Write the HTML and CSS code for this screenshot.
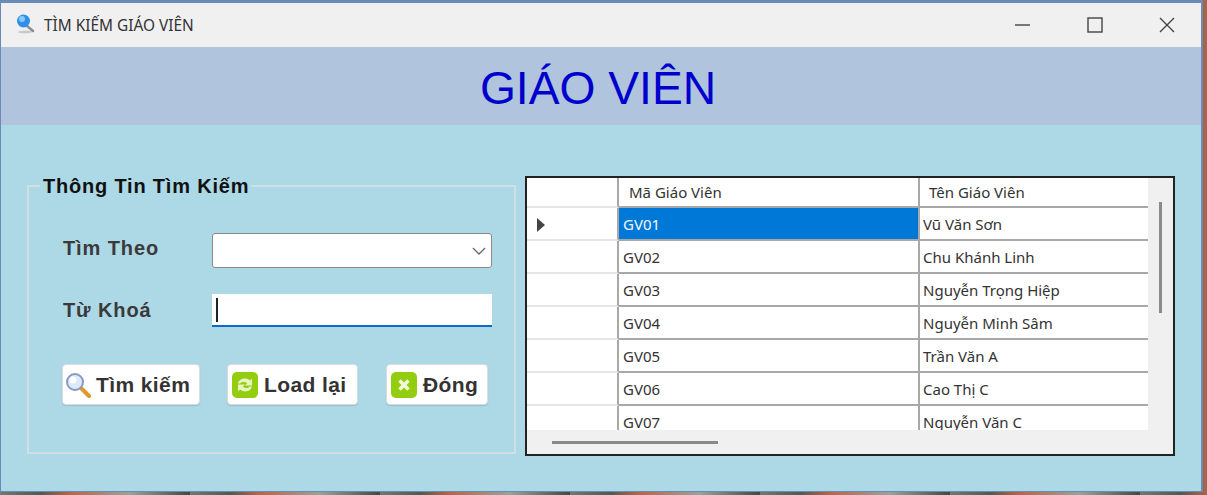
FILE: index.html
```html
<!DOCTYPE html>
<html lang="en">
<head>
    <meta charset="UTF-8">
    <meta name="viewport" content="width=device-width, initial-scale=1.0">
    <title>Tìm Kiếm Giáo Viên</title>
    <link rel="stylesheet" href="styles.css">
</head>
<body>
    <div class="window">
        <div class="titlebar">
            <svg class="title-icon" width="22" height="24" viewBox="0 0 22 24">
                <ellipse cx="10" cy="20" rx="7" ry="1.5" fill="#c9c9c9"/>
                <path d="M12 14l6 5" stroke="#8a8f96" stroke-width="2.5" stroke-linecap="round"/>
                <circle cx="8.5" cy="9" r="6.5" fill="#2f8fe8"/>
                <circle cx="7" cy="7" r="3" fill="#8cc8fa"/>
            </svg>
            <span class="title-text">TÌM KIẾM GIÁO VIÊN</span>
            <div class="window-controls">
                <svg width="16" height="16" viewBox="0 0 16 16"><path d="M0 8h15" stroke="#444" stroke-width="1.4"/></svg>
                <svg width="16" height="16" viewBox="0 0 16 16"><rect x="1" y="1" width="14" height="14" fill="none" stroke="#444" stroke-width="1.4"/></svg>
                <svg width="16" height="16" viewBox="0 0 16 16"><path d="M1 1l14 14M15 1L1 15" stroke="#444" stroke-width="1.4"/></svg>
            </div>
        </div>

        <div class="banner">GIÁO VIÊN</div>

        <div class="content">
            <fieldset class="search-group">
                <legend>Thông Tin Tìm Kiếm</legend>

                <div class="field field-combo">
                    <label for="search-by">Tìm Theo</label>
                    <div class="combo" id="search-by">
                        <svg width="14" height="8" viewBox="0 0 14 8"><path d="M1 1l6 6 6-6" fill="none" stroke="#666" stroke-width="1.3"/></svg>
                    </div>
                </div>

                <div class="field field-keyword">
                    <label for="keyword">Từ Khoá</label>
                    <div class="keyword" id="keyword"><span class="caret"></span></div>
                </div>

                <div class="actions">
                    <button class="btn btn-search" type="button">
                        <svg width="26" height="26" viewBox="0 0 26 26">
                            <path d="M16 16l8 8" stroke="#e09a2c" stroke-width="4" stroke-linecap="round"/>
                            <circle cx="10" cy="10" r="8" fill="#dcebfa" stroke="#8c96c4" stroke-width="2"/>
                            <circle cx="8" cy="8" r="3.500" fill="#fff"/>
                        </svg>
                        Tìm kiếm
                    </button>
                    <button class="btn btn-reload" type="button">
                        <svg width="26" height="26" viewBox="0 0 26 26">
                            <rect width="26" height="26" rx="5" fill="#94cc10"/>
                            <path d="M6 11.500c1-5 8-6.500 12-3l2-2v7h-7l2.200-2.200c-2.500-2-6-1.500-7 .2zM20 14.500c-1 5-8 6.500-12 3l-2 2v-7h7l-2.200 2.200c2.500 2 6 1.500 7-.2z" fill="#e6f5c0"/>
                        </svg>
                        Load lại
                    </button>
                    <button class="btn btn-close" type="button">
                        <svg width="26" height="26" viewBox="0 0 26 26">
                            <rect width="26" height="26" rx="5" fill="#94cc10"/>
                            <path d="M8.500 8.500l9 9M17.500 8.500l-9 9" stroke="#f0f8d8" stroke-width="3.600"/>
                        </svg>
                        Đóng
                    </button>
                </div>
            </fieldset>

            <div class="data-grid">
                <div class="grid-top">
                    <div class="grid-rows">
                        <div class="row row-head">
                            <div class="cell-head"></div>
                            <div class="cell">Mã Giáo Viên</div>
                            <div class="cell">Tên Giáo Viên</div>
                        </div>
                        <div class="row row-active">
                            <div class="cell-head"><span class="arrow"></span></div>
                            <div class="cell cell-selected">GV01</div>
                            <div class="cell">Vũ Văn Sơn</div>
                        </div>
                        <div class="row">
                            <div class="cell-head"></div>
                            <div class="cell">GV02</div>
                            <div class="cell">Chu Khánh Linh</div>
                        </div>
                        <div class="row">
                            <div class="cell-head"></div>
                            <div class="cell">GV03</div>
                            <div class="cell">Nguyễn Trọng Hiệp</div>
                        </div>
                        <div class="row">
                            <div class="cell-head"></div>
                            <div class="cell">GV04</div>
                            <div class="cell">Nguyễn Minh Sâm</div>
                        </div>
                        <div class="row">
                            <div class="cell-head"></div>
                            <div class="cell">GV05</div>
                            <div class="cell">Trần Văn A</div>
                        </div>
                        <div class="row">
                            <div class="cell-head"></div>
                            <div class="cell">GV06</div>
                            <div class="cell">Cao Thị C</div>
                        </div>
                        <div class="row">
                            <div class="cell-head"></div>
                            <div class="cell">GV07</div>
                            <div class="cell">Nguyễn Văn C</div>
                        </div>
                    </div>
                    <div class="vscroll"><div class="vthumb"></div></div>
                </div>
                <div class="hscroll"><div class="hthumb"></div></div>
            </div>
        </div>
    </div>
</body>
</html>
```

FILE: styles.css
```css
html, body {
    margin: 0;
    height: 495px;
    overflow: hidden;
}
body {
    background: repeating-linear-gradient(90deg, #6f7a70 0, #4f5a50 40px, #b9654a 70px, #9aa39a 130px, #3f4a44 190px);
    font-family: "Liberation Sans", Arial, sans-serif;
}
.window {
    box-sizing: border-box;
    width: 1203px;
    height: 492px;
    border: 1px solid #6a8bb5;
    border-top-width: 3px;
    border-right-width: 2px;
    display: flex;
    flex-direction: column;
    background-color: #add8e6;
}
.titlebar {
    height: 44px;
    flex-shrink: 0;
    display: flex;
    align-items: center;
    background-color: #f0f0f0;
    padding-left: 14px;
}
.title-icon {
    margin-top: -3px;
}
.title-text {
    margin-left: 7px;
    font-family: "Noto Sans", sans-serif;
    font-size: 15.400px;
    color: #333;
}
.window-controls {
    margin-left: auto;
    margin-right: 26px;
    display: flex;
    gap: 56px;
}
.banner {
    height: 78px;
    flex-shrink: 0;
    background-color: #b0c4de;
    color: #0000cd;
    font-size: 46.200px;
    line-height: 82px;
    text-align: center;
    box-sizing: border-box;
    padding-right: 6px;
}
.content {
    flex: 1;
    display: flex;
    align-items: flex-start;
    padding: 51px 0 0 26px;
    gap: 9px;
}
.search-group {
    box-sizing: border-box;
    width: 489px;
    height: 278px;
    margin: 0;
    padding: 0 0 0 34px;
    border: 2px solid #cfdfe6;
    border-radius: 0;
}
.search-group legend {
    margin-left: -23px;
    padding: 0 2px 0 3px;
    font-size: 20px;
    font-weight: bold;
    color: #111;
    line-height: 20px;
    letter-spacing: 0.8px;
}
.field {
    display: flex;
    align-items: center;
}
.field label {
    width: 149px;
    font-size: 20px;
    font-weight: bold;
    color: #3a3a3a;
    letter-spacing: 0.9px;
}
.field-combo {
    margin-top: 37px;
}
.field-combo label {
    padding-bottom: 5px;
}
.field-keyword {
    margin-top: 26px;
}
.combo {
    box-sizing: border-box;
    width: 280px;
    height: 35px;
    background-color: #fff;
    border: 1px solid #8a8a8a;
    border-radius: 3px;
    display: flex;
    align-items: center;
    justify-content: flex-end;
    padding-right: 5px;
}
.keyword {
    box-sizing: border-box;
    width: 280px;
    height: 33px;
    background-color: #fff;
    border-bottom: 2px solid #0a6cc4;
    display: flex;
    align-items: center;
    padding-left: 4px;
}
.caret {
    width: 2px;
    height: 24px;
    background-color: #222;
}
.actions {
    display: flex;
    margin: 37px 0 0 -1px;
}
.btn {
    height: 41px;
    box-sizing: border-box;
    display: flex;
    align-items: center;
    background-color: #fff;
    border: 1px solid #dcdcdc;
    border-radius: 4px;
    box-shadow: 0 1px 1px rgba(0, 0, 0, 0.12);
    font-family: "Liberation Sans", Arial, sans-serif;
    font-size: 21px;
    font-weight: bold;
    letter-spacing: 0.4px;
    color: #333;
    padding: 0;
}
.btn-search {
    width: 138px;
    padding-left: 2px;
    gap: 5px;
}
.btn-reload {
    width: 131px;
    margin-left: 27px;
    padding-left: 4px;
    gap: 6px;
}
.btn-close {
    width: 102px;
    margin-left: 28px;
    padding-left: 4px;
    gap: 6px;
}
.data-grid {
    box-sizing: border-box;
    width: 650px;
    height: 280px;
    border: 2px solid #222;
    background-color: #f0f0f0;
    display: flex;
    flex-direction: column;
}
.grid-top {
    height: 252px;
    display: flex;
}
.grid-rows {
    width: 621px;
    height: 252px;
    overflow: hidden;
    background-color: #fff;
}
.row {
    box-sizing: border-box;
    height: 33px;
    display: grid;
    grid-template-columns: 92px 301px 228px;
    font-family: "Noto Sans", sans-serif;
    font-size: 15px;
    color: #333;
}
.row-head {
    height: 30px;
}
.cell-head {
    box-sizing: border-box;
    border-right: 2px solid #a8a8a8;
    border-bottom: 2px solid #e6e6e6;
    display: flex;
    align-items: center;
    padding: 2px 0 0 10px;
}
.cell {
    box-sizing: border-box;
    border-right: 2px solid #a8a8a8;
    border-bottom: 2px solid #a8a8a8;
    padding: 1px 0 0 4px;
    line-height: 31px;
    white-space: nowrap;
    overflow: hidden;
}
.row-head .cell {
    padding: 0 0 0 10px;
    line-height: 28px;
}
.row .cell:last-child {
    border-right: none;
    padding-left: 3px;
}
.row-head .cell:last-child {
    padding-left: 9px;
}
.cell-selected {
    background-color: #0078d7;
    color: #f2f8ff;
}
.arrow {
    width: 0;
    height: 0;
    border-left: 8px solid #444;
    border-top: 7px solid transparent;
    border-bottom: 7px solid transparent;
}
.vscroll {
    width: 25px;
    padding-top: 24px;
    display: flex;
    justify-content: center;
}
.vthumb {
    width: 3px;
    height: 111px;
    background-color: #8a8a8a;
}
.hscroll {
    flex: 1;
    padding: 11px 0 0 25px;
}
.hthumb {
    width: 166px;
    height: 3px;
    background-color: #8a8a8a;
}
```
